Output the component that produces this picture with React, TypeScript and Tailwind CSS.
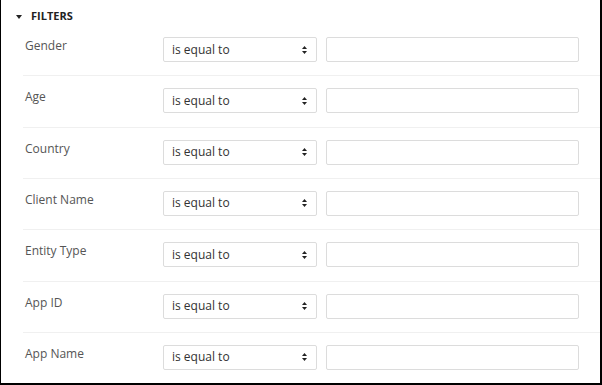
import React from "react";

const filters = ["Gender", "Age", "Country", "Client Name", "Entity Type", "App ID", "App Name"];

function SortIcon() {
  return (
    <svg width="5" height="8" viewBox="0 0 5 8" className="text-[#222]">
      <path d="M2.5 0 L5 3 L0 3 Z" fill="currentColor" />
      <path d="M0 5 L5 5 L2.5 8 Z" fill="currentColor" />
    </svg>
  );
}

function FilterRow({ label }: { label: string }) {
  return (
    <div className="flex h-[51.33px] items-start border-b border-[#f0f0f0] pl-[2px] pt-[12px]">
      <div className="w-[138px] text-[12px] leading-[18px] text-[#555]">{label}</div>
      <div className="flex h-[25px] w-[154px] items-center justify-between rounded-[2px] border border-[#dcdcdc] pl-[8px] pr-[9px] text-[12px] text-[#333]">
        <span>is equal to</span>
        <SortIcon />
      </div>
      <div className="ml-[9px] h-[25px] w-[253px] rounded-[2px] border border-[#dcdcdc]" />
    </div>
  );
}

export default function App() {
  return (
    <div
      className="h-[385px] w-[602px] overflow-hidden border-b-2 border-l border-r-2 border-black bg-white"
      style={{ fontFamily: '"Open Sans", "Noto Sans", sans-serif' }}
    >
      {/* Header */}
      <div className="flex h-[25px] items-start pl-[15px] pt-[9px]">
        <svg width="6" height="4" viewBox="0 0 6 4" className="mt-[6px] text-[#222]">
          <path d="M0 0 L6 0 L3 4 Z" fill="currentColor" />
        </svg>
        <span className="ml-[9px] text-[11px] font-bold leading-[14px] text-[#222]">FILTERS</span>
      </div>

      {/* Rows */}
      <div className="ml-[22px]">
        {filters.map((f) => (
          <FilterRow key={f} label={f} />
        ))}
      </div>
    </div>
  );
}
